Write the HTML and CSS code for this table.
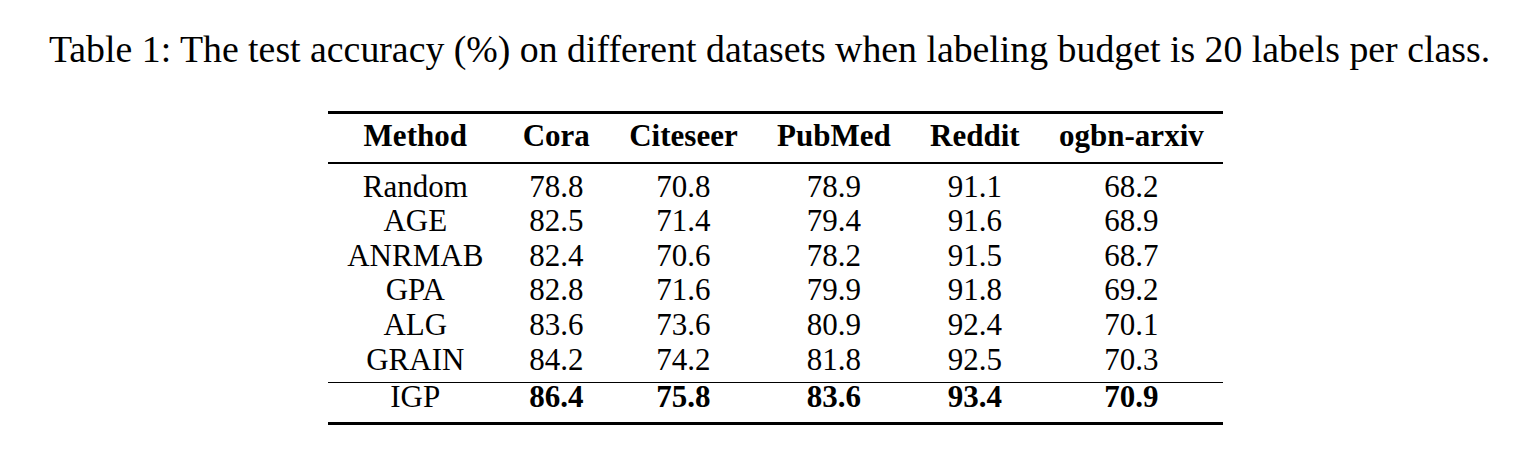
FILE: index.html
```html
<!DOCTYPE html>
<html>
<head>
<meta charset="utf-8">
<link rel="stylesheet" href="styles.css">
</head>
<body>
<div class="page">
  <p class="caption">Table 1: The test accuracy (%) on different datasets when labeling budget is 20 labels per class.</p>
  <div class="table-wrap">
    <table class="results">
      <thead>
        <tr>
          <th>Method</th><th>Cora</th><th>Citeseer</th><th>PubMed</th><th>Reddit</th><th>ogbn-arxiv</th>
        </tr>
      </thead>
      <tbody>
        <tr class="first"><td>Random</td><td>78.8</td><td>70.8</td><td>78.9</td><td>91.1</td><td>68.2</td></tr>
        <tr><td>AGE</td><td>82.5</td><td>71.4</td><td>79.4</td><td>91.6</td><td>68.9</td></tr>
        <tr><td>ANRMAB</td><td>82.4</td><td>70.6</td><td>78.2</td><td>91.5</td><td>68.7</td></tr>
        <tr><td>GPA</td><td>82.8</td><td>71.6</td><td>79.9</td><td>91.8</td><td>69.2</td></tr>
        <tr><td>ALG</td><td>83.6</td><td>73.6</td><td>80.9</td><td>92.4</td><td>70.1</td></tr>
        <tr class="last"><td>GRAIN</td><td>84.2</td><td>74.2</td><td>81.8</td><td>92.5</td><td>70.3</td></tr>
        <tr class="ours"><td>IGP</td><td class="best">86.4</td><td class="best">75.8</td><td class="best">83.6</td><td class="best">93.4</td><td class="best">70.9</td></tr>
      </tbody>
    </table>
  </div>
</div>
</body>
</html>
```

FILE: styles.css
```css
html, body {
  margin: 0;
  padding: 0;
  background: #ffffff;
}

.page {
  font-family: "Liberation Serif", "Times New Roman", serif;
  color: #000000;
}

.caption {
  margin: 0;
  padding-top: 28px;
  font-size: 37.8px;
  line-height: 42px;
  text-align: center;
  white-space: nowrap;
}

.table-wrap {
  display: flex;
  justify-content: center;
  padding-left: 12px;
  padding-top: 41px;
}

.results {
  border-collapse: collapse;
  font-size: 31px;
  border-top: 3px solid #000;
  border-bottom: 3px solid #000;
}

.results th,
.results td {
  padding: 0 19.7px;
  text-align: center;
  line-height: 34.6px;
  white-space: nowrap;
}

.results th {
  font-weight: bold;
  padding-top: 5px;
  padding-bottom: 8px;
  border-bottom: 2px solid #000;
}

.results tr.first td {
  padding-top: 6px;
}

.results tr.last td {
  padding-bottom: 4.5px;
}

.results tr.ours td {
  border-top: 1px solid #000;
  line-height: 27px;
  padding-bottom: 12px;
}

.results td.best {
  font-weight: bold;
}
```
